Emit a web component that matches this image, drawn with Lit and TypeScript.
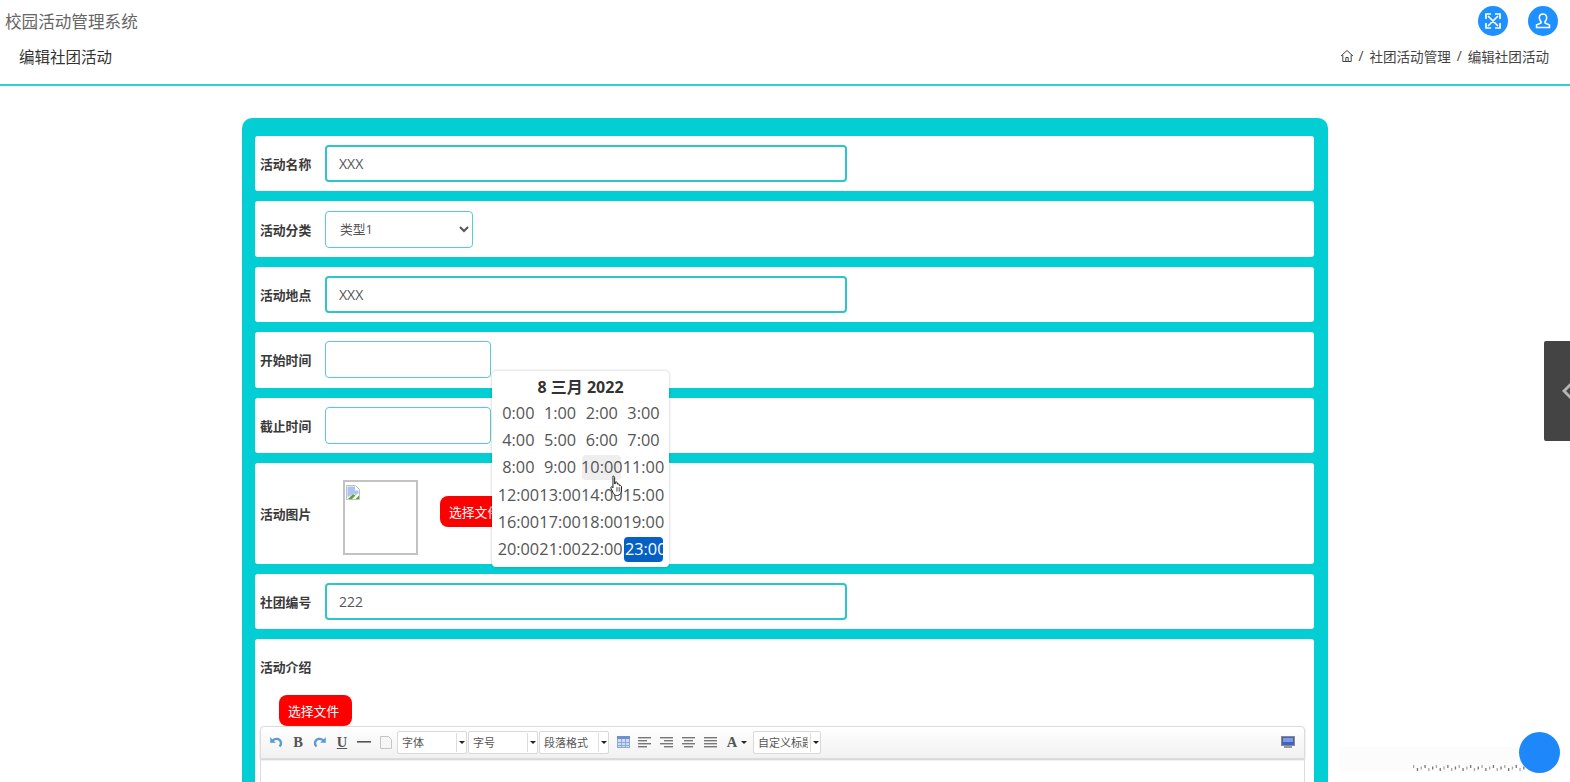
import { LitElement, html, css, svg } from "lit";
import { customElement } from "lit/decorators.js";

const hours = Array.from({ length: 24 }, (_, i) => `${i}:00`);
const dots = Array.from({ length: 30 }, (_, i) => i);

const line = (rows: number[][]) => html`<svg width="14" height="12" viewBox="0 0 14 12">${rows.map(
  ([x, y, w]) => svg`<rect x=${x} y=${y} width=${w} height="1.4" fill="#777"></rect>`
)}</svg>`;

@customElement("app-root")
export class AppRoot extends LitElement {
  static styles = css`
    :host {
      display: block;
      position: relative;
      height: 782px;
      overflow: hidden;
      background: #fff;
      font-family: "Open Sans", "Noto Sans CJK SC", sans-serif;
      color: #333;
    }
    .top { display: flex; align-items: center; justify-content: space-between; height: 42px; padding: 0 12px 0 5px; }
    .brand { font-size: 16.6px; color: #666; }
    .round { display: flex; gap: 20px; }
    .round span { width: 30px; height: 30px; border-radius: 50%; background: #1e90ff; display: flex; align-items: center; justify-content: center; }
    .sub { display: flex; align-items: center; justify-content: space-between; height: 28px; padding: 0 21px 14px 19px; border-bottom: 2px solid #2fcfd6; box-sizing: content-box; }
    .sub h1 { margin: 0; font-size: 15.5px; font-weight: 400; color: #333; }
    .crumb { display: flex; align-items: center; gap: 6px; font-size: 13.55px; color: #444; }
    .crumb svg { margin-right: -2px; }
    .card { margin: 32px 0 0 242px; width: 1059px; background: #03ced4; border-radius: 10px; padding: 18px 14px 18px 13px; display: flex; flex-direction: column; gap: 10px; height: 800px; }
    .row { background: #fff; border-radius: 3px; height: 55.4px; display: flex; align-items: center; padding-left: 5px; flex: none; }
    .row.tall { height: 101px; }
    .row.rich { display: block; height: 400px; padding: 0 9px 0 5px; }
    label { font-size: 12.8px; font-weight: 700; width: 65px; flex: none; color: #3a3a3a; }
    input, select {
      box-sizing: border-box; height: 37px; border-radius: 4px; font-family: inherit; color: #555; background: #fff; outline: none;
    }
    .wide { width: 522px; border: 2px solid #2cc5cb; font-size: 14px; padding: 0 12px; }
    .date { width: 166px; border: 1px solid #55cdd2; }
    select { width: 148px; border: 1px solid #55cdd2; font-size: 12.8px; padding: 0 10px; }
    .photo { box-sizing: border-box; width: 75px; height: 75px; margin: 9px 0 0 18px; border: 2px solid #c2c2c2; padding: 1px; display: block; }
    .btn { border: 0; border-radius: 8px; background: #f00; color: #fff; font: inherit; font-size: 12.8px; height: 31px; width: 73px; padding: 0 0 0 9px; text-align: left; }
    .photo-btn { margin: 0 0 3px 22px; }
    .rich label { display: block; padding-top: 18.5px; line-height: 18px; width: auto; }
    .rich .btn { display: block; margin: 19px 0 0 19px; }
    .toolbar {
      box-sizing: border-box; height: 33px; display: flex; align-items: center; padding: 0 5px 0 4px;
      border: 1px solid #dcdcdc; border-radius: 4px 4px 0 0; background: linear-gradient(#fff, #f1f1f1); box-shadow: 0 1px 2px #ccc;
    }
    .ic { width: 22px; height: 22px; display: flex; align-items: center; justify-content: center; flex: none; }
    .ic.letter { font-family: "Liberation Serif", serif; font-weight: 700; font-size: 14.5px; color: #555; }
    .ic.under { text-decoration: underline; }
    .combo { box-sizing: border-box; width: 70px; height: 23px; margin-right: 1px; border: 1px solid #d9d9d9; border-radius: 2px; background: #fff; display: flex; align-items: center; font-size: 11px; color: #555; padding-left: 4px; position: relative; flex: none; overflow: hidden; white-space: nowrap; }
    .combo b { position: absolute; right: 0; top: 0; bottom: 0; width: 9px; background: #fff; border-left: 1px solid #ddd; margin: 1px 0; display: flex; align-items: center; justify-content: center; }
    .caret { width: 0; height: 0; border: 3px solid transparent; border-top: 3px solid #222; border-bottom: 0; display: block; }
    .table-ic { margin-left: 2px; }
    .font-color { width: 30px; gap: 4px; }
    .last { width: 68px; margin-left: 1px; }
    .last-text { overflow: hidden; width: 50px; }
    .screen { margin-left: auto; }
    .editor { height: 200px; border: 1px solid #ddd; border-top: 0; }

    .picker {
      position: absolute; left: 492px; top: 371px; width: 177px; height: 196px; box-sizing: border-box; background: #fff; border-radius: 4px;
      box-shadow: 0 0 3px rgba(0,0,0,.25); padding: 3px 5px; color: #555; font-size: 16.3px;
    }
    .picker h2 { margin: 0; font-size: 16px; font-weight: 700; color: #333; text-align: center; line-height: 26px; }
    .hours { display: grid; grid-template-columns: repeat(4, 39px); column-gap: 2.7px; row-gap: 2.4px; padding-left: 1.9px; }
    .hours span { height: 25px; border-radius: 4px; display: flex; align-items: center; justify-content: center; white-space: nowrap; }
    .hours .hover { background: #eee; }
    .hours .active { background: #0560c4; color: #fff; overflow: hidden; justify-content: flex-start; padding-left: 1px; }
    .hand { position: absolute; left: 610px; top: 475px; }
    .tab { position: absolute; right: 0; top: 341px; width: 26px; height: 100px; background: #444; border-radius: 2px 0 0 2px; display: flex; align-items: center; padding-left: 18px; box-sizing: border-box; overflow: hidden; }
    .tab svg { flex: none; }
    .band { position: absolute; left: 1339px; top: 747px; width: 190px; height: 25px; background: #fcfcfc; }
    .band svg { position: absolute; left: 74px; top: 17px; }
    .fab { position: absolute; left: 1519px; top: 732px; width: 41px; height: 41px; border-radius: 50%; background: #1e88fa; }
  `;

  private textRow(name: string, value: string) {
    return html`<div class="row"><label>${name}</label><input class="wide" .value=${value} /></div>`;
  }
  private dateRow(name: string) {
    return html`<div class="row"><label>${name}</label><input class="date" /></div>`;
  }
  private combo(text: string) {
    return html`<div class="combo">${text}<b><i class="caret"></i></b></div>`;
  }

  render() {
    return html`
      <div class="top">
        <div class="brand">校园活动管理系统</div>
        <div class="round">
          <span><svg width="18" height="18" viewBox="0 0 18 18" fill="none" stroke="#fff" stroke-width="1.7"><path d="M4 4l10 10M14 4L4 14M2 7V2h5M11 2h5v5M16 11v5h-5M7 16H2v-5"/></svg></span>
          <span><svg width="18" height="18" viewBox="0 0 18 18" fill="none" stroke="#fff" stroke-width="1.5"><path d="M9 2c-2.300 0-3.700 1.700-3.700 3.800 0 1.700.9 3 1.700 3.800v1.400L2.500 13v2.500h13V13L11 11V9.600c.8-.8 1.700-2.100 1.700-3.800C12.700 3.700 11.300 2 9 2z"/></svg></span>
        </div>
      </div>
      <div class="sub">
        <h1>编辑社团活动</h1>
        <div class="crumb">
          <svg width="14" height="14" viewBox="0 0 14 14" fill="none" stroke="#444" stroke-width="1"><path d="M1 7l6-5.500L13 7M2.800 6v6.500h8.400V6M5.800 12.500V8.500h2.400v4"/></svg>
          <span>/</span><span>社团活动管理</span><span>/</span><span>编辑社团活动</span>
        </div>
      </div>
      <div class="card">
        ${this.textRow("活动名称", "XXX")}
        <div class="row"><label>活动分类</label><select><option>类型1</option></select></div>
        ${this.textRow("活动地点", "XXX")}
        ${this.dateRow("开始时间")}
        ${this.dateRow("截止时间")}
        <div class="row tall">
          <label>活动图片</label>
          <div class="photo">
            <svg width="15" height="15" viewBox="0 0 15 15"><path d="M.5.5h9l4 4v10H.5z" fill="#fff" stroke="#c0c0c0"/><path d="M1.500 1.500h7.500v4h3.500v3l-3 1.500-2-1.500-6 4z" fill="#a9c4ee"/><path d="M2 14l5-5 2.500 1.500L6 14z" fill="#5aa532"/><path d="M9.500 14l3.500-3.500V14z" fill="#5aa532"/></svg>
          </div>
          <button class="btn photo-btn">选择文件</button>
        </div>
        ${this.textRow("社团编号", "222")}
        <div class="row rich">
          <label>活动介绍</label>
          <button class="btn">选择文件</button>
          <div class="toolbar">
            <span class="ic"><svg width="14" height="12" viewBox="0 0 14 12" fill="none" stroke="#5b9bd5" stroke-width="2.400"><path d="M3 5c3-3.500 8-2.500 9 1.500 .3 1.500-.5 3-1.500 4"/><path d="M1.500 1.500v5h5" fill="#5b9bd5" stroke-width=".6"/></svg></span>
            <span class="ic letter">B</span>
            <span class="ic"><svg width="14" height="12" viewBox="0 0 14 12" fill="none" stroke="#5b9bd5" stroke-width="2.400"><path d="M11 5C8 1.500 3 2.500 2 6.500c-.3 1.500.5 3 1.500 4"/><path d="M12.500 1.500v5h-5" fill="#5b9bd5" stroke-width=".6"/></svg></span>
            <span class="ic letter under">U</span>
            <span class="ic"><svg width="14" height="2"><rect width="14" height="1.600" fill="#555"/></svg></span>
            <span class="ic"><svg width="12" height="13" viewBox="0 0 12 13"><path d="M.5.5h8l3 3v9H.5z" fill="#f6f6f6" stroke="#c4c4c4"/></svg></span>
            ${this.combo("字体")}${this.combo("字号")}${this.combo("段落格式")}
            <span class="ic table-ic"><svg width="13" height="12" viewBox="0 0 13 12"><rect width="13" height="12" fill="#cfdcf2"/><rect width="13" height="3" fill="#6d8fd0"/><path d="M.5 3v9M4.500 3v9M8.500 3v9M12.500 3v9M0 6.500h13M0 9.500h13M0 11.500h13" stroke="#8ea8da" fill="none"/></svg></span>
            <span class="ic">${line([[0,1,13],[0,4,9],[0,7,13],[0,10,9]])}</span>
            <span class="ic">${line([[0,1,13],[4,4,9],[0,7,13],[4,10,9]])}</span>
            <span class="ic">${line([[0,1,13],[2,4,9],[0,7,13],[2,10,9]])}</span>
            <span class="ic">${line([[0,1,13],[0,4,13],[0,7,13],[0,10,13]])}</span>
            <span class="ic letter font-color">A<i class="caret"></i></span>
            <div class="combo last"><span class="last-text">自定义标题</span><b><i class="caret"></i></b></div>
            <span class="ic screen"><svg width="14" height="13" viewBox="0 0 14 13"><rect x=".5" y=".5" width="13" height="9" fill="#3f63c4" stroke="#8b8b8b"/><rect x="2" y="2" width="10" height="4" fill="#7f9ae0"/><rect x="3" y="10" width="8" height="2" fill="#999"/></svg></span>
          </div>
          <div class="editor"></div>
        </div>
      </div>

      <div class="picker">
        <h2>8 三月 2022</h2>
        <div class="hours">
          ${hours.map((h, i) => html`<span class="${i === 10 ? "hover" : i === 23 ? "active" : ""}">${h}</span>`)}
        </div>
      </div>
      <svg class="hand" width="15" height="21" viewBox="0 0 13 19"><path d="M2.600 1c1 0 1.300.7 1.300 1.500v5.500h.6V6.500c1-.6 1.800 0 1.800.7v1c1-.5 1.900 0 1.900.8v.6c1-.5 1.900 0 1.900 1v3c0 2.500-1.200 4.900-3.400 4.900H5.500c-1.500 0-2-1-3-2.500L.6 12c-.6-1 .7-1.800 1.500-.9l.3.500V2.500C2.400 1.600 1.800 1 2.600 1z" fill="#fff" stroke="#222" stroke-width=".9"/><path d="M6 11v4M8 11v4M10 11v4" stroke="#222" stroke-width=".7"/></svg>
      <div class="tab"><svg width="12" height="20" viewBox="0 0 12 20" fill="none" stroke="#b5b5b5" stroke-width="3"><path d="M10 2L2 10l8 8"/></svg></div>
      <div class="band">
        <svg width="115" height="8" viewBox="0 0 115 8">${dots.map(
          (i) => svg`<rect x=${i * 3.8} y=${i % 3 === 0 ? 1 : i % 3 === 1 ? 4 : 2.5} width="1.300" height="3" fill="#555" opacity=${i % 2 ? 0.8 : 0.5}></rect>`
        )}</svg>
      </div>
      <div class="fab"></div>
    `;
  }
}
